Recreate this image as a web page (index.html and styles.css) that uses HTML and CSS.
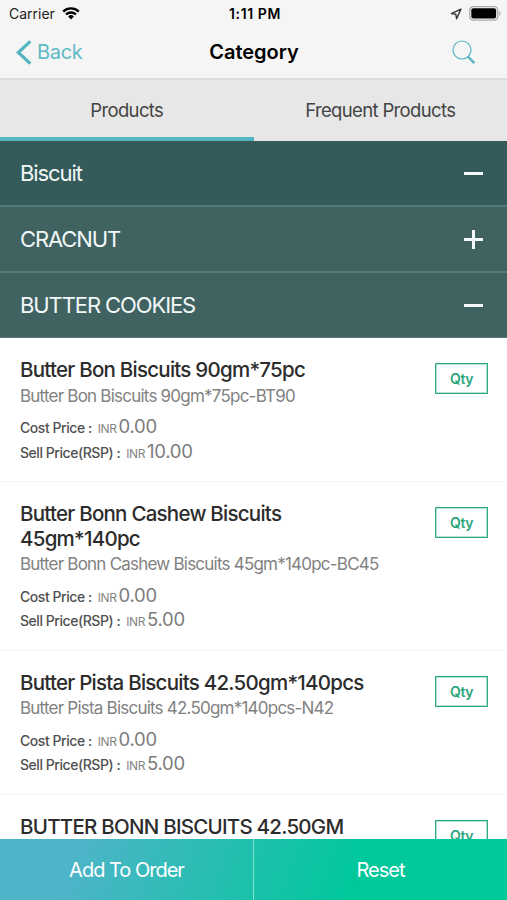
FILE: index.html
```html
<!doctype html>
<html lang="en">
  <head>
    <meta charset="UTF-8" />
    <meta name="viewport" content="width=device-width, initial-scale=1.0" />
    <title>Category</title>
    <link rel="stylesheet" href="styles.css">
  </head>
  <body>
    <div class="app">
      <!-- Status bar -->
      <div class="status-bar">
        <div class="status-left">
          <span class="carrier">Carrier</span>
          <svg viewBox="0 0 18 13" width="18" height="13">
            <path d="M1.2 4.6a11.2 11.2 0 0 1 15.6 0M4 7.5a7.2 7.2 0 0 1 10 0" fill="none" stroke="#000" stroke-width="2.3"/>
            <path d="M9 12.4L6.1 9.4a4.2 4.2 0 0 1 5.8 0z"/>
          </svg>
        </div>
        <div class="clock">1:11 PM</div>
        <div class="status-right">
          <svg viewBox="0 0 12 12" width="12" height="12">
            <path d="M10.9 1.1L1.4 5.6l4.4.6.8 4.5z" fill="none" stroke="#333" stroke-width="1.4" stroke-linejoin="round"/>
          </svg>
          <svg viewBox="0 0 32 15" width="32" height="15">
            <rect x=".7" y=".7" width="28" height="13.4" rx="3.6" fill="none" stroke="#aaa" stroke-width="1.3"/>
            <rect x="2.3" y="2.3" width="24.8" height="10.2" rx="2"/>
            <path d="M30.2 5c1.7.5 1.7 4.3 0 4.8z" fill="#aaa"/>
          </svg>
        </div>
      </div>

      <!-- Navigation bar -->
      <div class="nav-bar">
        <button class="back-button">
          <svg viewBox="0 0 16 25" width="16" height="25">
            <path d="M14.3 1.3L2.3 12.5l12 11.2" fill="none" stroke="#53b4c2" stroke-width="3.2"/>
          </svg>
          <span>Back</span>
        </button>
        <h1 class="nav-title">Category</h1>
        <button class="search-button">
          <svg viewBox="0 0 24 25" width="24" height="25">
            <circle cx="10" cy="10" r="9" fill="none" stroke="#53b4c2" stroke-width="1.2"/>
            <path d="M15.8 16.5l6.6 6.6" stroke="#53b4c2" stroke-width="2.4"/>
          </svg>
        </button>
      </div>

      <!-- Tabs -->
      <div class="tabs">
        <div class="tab active">Products</div>
        <div class="tab">Frequent Products</div>
      </div>

      <!-- Categories -->
      <div class="category category-main">
        <span>Biscuit</span>
        <span class="toggle"></span>
      </div>
      <div class="category">
        <span>CRACNUT</span>
        <span class="toggle plus"></span>
      </div>
      <div class="category category-last">
        <span>BUTTER COOKIES</span>
        <span class="toggle"></span>
      </div>

      <!-- Product list -->
      <div class="product-list">
        <div class="product">
          <div class="product-info">
            <div class="product-title">Butter Bon Biscuits 90gm*75pc</div>
            <div class="product-code">Butter Bon Biscuits 90gm*75pc-BT90</div>
            <div class="price-row first"><span class="price-label">Cost Price :</span><span class="currency">INR</span><span class="price">0.00</span></div>
            <div class="price-row"><span class="price-label">Sell Price(RSP) :</span><span class="currency">INR</span><span class="price">10.00</span></div>
          </div>
          <button class="qty-button">Qty</button>
        </div>
        <div class="product">
          <div class="product-info">
            <div class="product-title">Butter Bonn Cashew Biscuits<br>45gm*140pc</div>
            <div class="product-code">Butter Bonn Cashew Biscuits 45gm*140pc-BC45</div>
            <div class="price-row first"><span class="price-label">Cost Price :</span><span class="currency">INR</span><span class="price">0.00</span></div>
            <div class="price-row"><span class="price-label">Sell Price(RSP) :</span><span class="currency">INR</span><span class="price">5.00</span></div>
          </div>
          <button class="qty-button">Qty</button>
        </div>
        <div class="product">
          <div class="product-info">
            <div class="product-title">Butter Pista Biscuits 42.50gm*140pcs</div>
            <div class="product-code">Butter Pista Biscuits 42.50gm*140pcs-N42</div>
            <div class="price-row first"><span class="price-label">Cost Price :</span><span class="currency">INR</span><span class="price">0.00</span></div>
            <div class="price-row"><span class="price-label">Sell Price(RSP) :</span><span class="currency">INR</span><span class="price">5.00</span></div>
          </div>
          <button class="qty-button">Qty</button>
        </div>
        <div class="product">
          <div class="product-info">
            <div class="product-title">BUTTER BONN BISCUITS 42.50GM</div>
          </div>
          <button class="qty-button">Qty</button>
        </div>
      </div>

      <!-- Bottom actions -->
      <div class="actions">
        <button class="action add">Add To Order</button>
        <button class="action">Reset</button>
      </div>
    </div>
  </body>
</html>
```
FILE: styles.css
```css
* {
  margin: 0;
  padding: 0;
  box-sizing: border-box;
}

body {
  font-family: Inter, 'Liberation Sans', sans-serif;
  background: #fff;
  color: #333;
}

button {
  font-family: inherit;
  border: none;
  background: none;
  cursor: pointer;
}

svg {
  display: block;
}

.app {
  width: 507px;
  height: 900px;
  display: flex;
  flex-direction: column;
  overflow: hidden;
}

/* Status bar */
.status-bar {
  height: 27px;
  flex: none;
  display: grid;
  grid-template-columns: 1fr auto 1fr;
  align-items: center;
  padding: 0 6px 0 9px;
  background: #f5f5f5;
  color: #000;
}

.status-left,
.status-right {
  display: flex;
  align-items: center;
  gap: 7px;
}

.status-right {
  justify-content: flex-end;
}

.carrier {
  font-size: 14px;
  color: #222;
}

.clock {
  font-size: 14px;
  font-weight: 600;
  letter-spacing: 0.6px;
}

/* Navigation bar */
.nav-bar {
  height: 53px;
  flex: none;
  display: grid;
  grid-template-columns: 1fr auto 1fr;
  align-items: center;
  padding: 0 15px 1px 16px;
  background: #f5f5f5;
  border-bottom: 2px solid #dcdcdc;
}

.back-button {
  display: flex;
  align-items: center;
  gap: 5px;
  font-size: 20px;
  letter-spacing: -0.3px;
  color: #5fbac6;
}

.nav-title {
  font-size: 20px;
  font-weight: 600;
  color: #000;
}

.search-button {
  justify-self: end;
  margin-right: 16px;
}

/* Tabs */
.tabs {
  height: 61px;
  flex: none;
  display: flex;
  background: #e7e7e7;
}

.tab {
  flex: 1;
  display: flex;
  align-items: center;
  justify-content: center;
  padding-top: 2px;
  border-bottom: 4px solid transparent;
  font-size: 18.5px;
  letter-spacing: -0.65px;
  color: #444;
}

.tab.active {
  border-bottom-color: #53b4c2;
}

/* Categories */
.category {
  height: 66px;
  flex: none;
  display: flex;
  align-items: center;
  justify-content: space-between;
  padding: 0 24px 0 20px;
  background: #406362;
  border-bottom: 2px solid #587b7a;
  font-size: 22px;
  letter-spacing: -1.1px;
  color: #f2f8f8;
}

.category-main {
  background: #345b5a;
}

.category-last {
  height: 65px;
  border-bottom: 1px solid #587b7a;
}

.toggle {
  width: 19px;
  height: 19px;
  background: linear-gradient(#f4fafb, #f4fafb) center / 100% 3px no-repeat;
}

.toggle.plus {
  background: linear-gradient(#f4fafb, #f4fafb) center / 100% 3px no-repeat,
    linear-gradient(#f4fafb, #f4fafb) center / 3px 100% no-repeat;
}

/* Product list */
.product-list {
  flex: 1;
  min-height: 0;
  overflow: hidden;
}

.product {
  display: flex;
  justify-content: space-between;
  align-items: flex-start;
  padding: 20px 19px 18px 20px;
  border-bottom: 1px solid #f3f3f3;
}

.product-info {
  white-space: nowrap;
}

.product-title {
  font-size: 20.5px;
  font-weight: 450;
  line-height: 24.5px;
  letter-spacing: -0.75px;
  color: #2c2c2c;
}

.product-code {
  font-size: 17px;
  line-height: 26px;
  letter-spacing: -0.78px;
  color: #828282;
}

.price-row {
  display: flex;
  align-items: baseline;
  height: 24.5px;
  line-height: 24.5px;
}

.price-row.first {
  margin-top: 5.5px;
}

.price-label {
  font-size: 14px;
  font-weight: 500;
  letter-spacing: -0.45px;
  color: #505050;
}

.currency {
  margin: 0 2px 0 6px;
  font-size: 12px;
  letter-spacing: -0.4px;
  color: #858585;
}

.price {
  font-size: 18.5px;
  letter-spacing: -0.3px;
  color: #7c7c7c;
}

.qty-button {
  flex: none;
  width: 53px;
  height: 31px;
  margin-top: 5px;
  border: 1px solid #2fa982;
  box-shadow: inset 0 0 0 1px #b5dfd1;
  font-size: 14px;
  font-weight: 600;
  letter-spacing: -0.5px;
  color: #2fa57e;
}

/* Bottom actions */
.actions {
  height: 61px;
  flex: none;
  display: flex;
  background: linear-gradient(110deg, #4eb4c8 15%, #00c89b 70%);
}

.action {
  flex: 1;
  font-size: 20px;
  letter-spacing: -1px;
  color: #fff;
}

.action.add {
  border-right: 1px solid #7fe0cc;
}
```
